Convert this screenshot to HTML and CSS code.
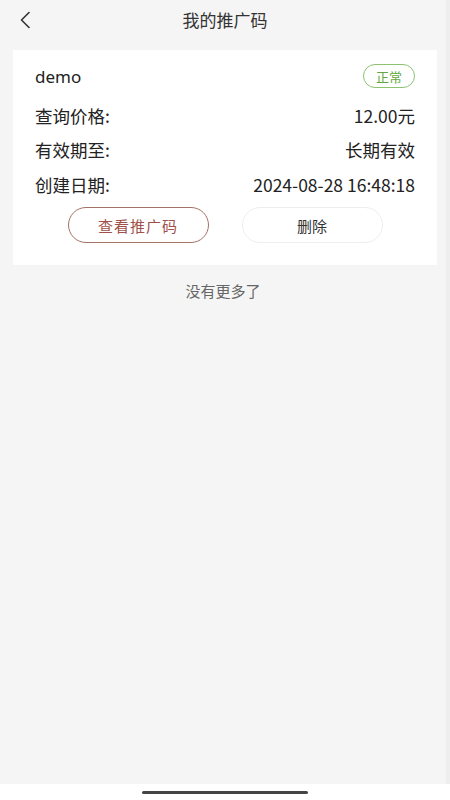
FILE: index.html
```html
<!DOCTYPE html>
<html lang="zh-CN">
<head>
<meta charset="utf-8">
<link rel="stylesheet" href="styles.css">
</head>
<body>
<div class="screen">
  <header class="navbar">
    <span class="back">
      <svg width="12" height="18" viewBox="0 0 12 18"><path d="M10 1.5 L2.5 9 L10 16.5" fill="none" stroke="#333" stroke-width="1.6" stroke-linecap="round" stroke-linejoin="round"/></svg>
    </span>
    <h1 class="title">我的推广码</h1>
  </header>
  <main class="content">
    <section class="card">
      <div class="card-head">
        <span class="name">demo</span>
        <span class="badge">正常</span>
      </div>
      <div class="row row-first"><span>查询价格:</span><span>12.00元</span></div>
      <div class="row"><span>有效期至:</span><span>长期有效</span></div>
      <div class="row"><span>创建日期:</span><span>2024-08-28 16:48:18</span></div>
      <div class="actions">
        <button class="btn btn-primary">查看推广码</button>
        <button class="btn btn-plain">删除</button>
      </div>
    </section>
    <p class="nomore">没有更多了</p>
  </main>
  <footer class="homebar"><span class="indicator"></span></footer>
</div>
</body>
</html>
```
FILE: styles.css
```css
* { box-sizing: border-box; }
html, body { margin: 0; padding: 0; }
body {
  width: 450px;
  height: 800px;
  font-family: "Noto Sans CJK SC", "Noto Sans", sans-serif;
  color: #222;
  background: #fff;
}
.screen {
  height: 800px;
  display: flex;
  flex-direction: column;
}
.navbar {
  height: 42px;
  background: #f5f5f5;
  display: flex;
  align-items: center;
  justify-content: center;
  position: relative;
  flex: none;
  border-right: 4px solid #eeeeee;
  padding-left: 4px;
  padding-bottom: 3px;
}
.back {
  position: absolute;
  left: 19px;
  top: 11px;
  display: flex;
}
.title {
  margin: 0;
  font-size: 17px;
  font-weight: normal;
  color: #333;
  line-height: 1;
}
.content {
  flex: 1;
  background: #f5f5f5;
  padding: 8px 13px 0;
  border-right: 4px solid #eeeeee;
}
.card {
  background: #fff;
  padding: 11px 22px 22px;
  margin-right: -4px;
}
.card-head {
  display: flex;
  justify-content: space-between;
  align-items: center;
  height: 30px;
}
.name {
  font-family: "Noto Sans", "Noto Sans CJK SC", sans-serif;
  font-size: 17px;
  color: #222;
}
.badge {
  width: 52px;
  height: 24px;
  border: 1px solid #8cc270;
  border-radius: 12px;
  color: #62a83f;
  font-size: 13px;
  display: flex;
  align-items: center;
  justify-content: center;
}
.row {
  display: flex;
  justify-content: space-between;
  align-items: center;
  height: 34.5px;
  font-size: 17.5px;
  color: #222;
}
.row-first { margin-top: 7px; }
.actions {
  display: flex;
  justify-content: center;
  gap: 33px;
  margin-top: 5.5px;
}
.btn {
  width: 141px;
  height: 36px;
  border-radius: 18px;
  background: #fff;
  font-family: "Noto Sans CJK SC", sans-serif;
  font-size: 15px;
  padding: 0;
}
.btn-primary {
  border: 1px solid #a27266;
  color: #a0524a;
  letter-spacing: 1px;
}
.btn-plain {
  border: 1px solid #eeeeee;
  color: #333;
}
.nomore {
  margin: 15px 0 0;
  text-align: center;
  font-size: 15px;
  color: #666;
}
.homebar {
  height: 16px;
  background: #fff;
  display: flex;
  justify-content: center;
  align-items: flex-start;
  flex: none;
}
.indicator {
  margin-top: 7px;
  width: 166px;
  height: 3px;
  border-radius: 2px;
  background: #444;
}
```
